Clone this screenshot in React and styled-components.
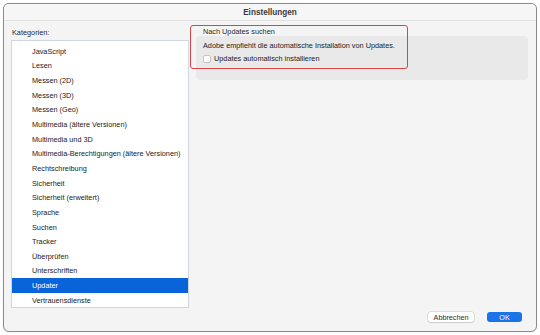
import styled, { createGlobalStyle } from 'styled-components';

const GlobalStyle = createGlobalStyle`
  html, body {
    margin: 0;
    padding: 0;
    background: #ffffff;
    font-family: "Liberation Sans", Arial, sans-serif;
    color: #222;
  }
`;

const Window = styled.div`
  position: relative;
  box-sizing: border-box;
  margin: 3px;
  width: 534px;
  height: 329px;
  border: 1px solid #8c8c8c;
  border-radius: 6px;
  background: #f4f4f4;
  display: flex;
  flex-direction: column;
  overflow: hidden;
  box-shadow: 0 0 1px rgba(0, 0, 0, 0.25);
`;

const TitleBar = styled.div`
  height: 16px;
  flex: none;
  display: flex;
  align-items: center;
  justify-content: center;
  font-size: 8.2px;
  font-weight: bold;
  color: #3a3a3a;
  border-bottom: 1px solid #e2e2e2;
  background: #f6f6f6;
`;

const Body = styled.div`
  display: flex;
  gap: 7px;
  padding: 7px 8px 0 7px;
`;

const LeftColumn = styled.div`
  width: 178px;
  display: flex;
  flex-direction: column;
`;

const Label = styled.div`
  font-size: 7.3px;
  line-height: 10px;
  height: 10px;
  color: #2a2a2a;
  padding-left: ${p => p.$indent || 0}px;
  margin-top: ${p => p.$shift || 0}px;
`;

const List = styled.div`
  margin-top: 2px;
  height: 268px;
  box-sizing: border-box;
  border: 1px solid #cfd6df;
  background: #ffffff;
  padding-top: 3px;
`;

const Item = styled.div`
  height: 14.65px;
  display: flex;
  align-items: center;
  padding-left: 20px;
  font-size: 7.3px;
  color: ${p => (p.$selected ? '#ffffff' : '#222')};
  background: ${p => (p.$selected ? '#0a64d9' : 'transparent')};
`;

const RightColumn = styled.div`
  flex: 1;
  display: flex;
  flex-direction: column;
`;

const Group = styled.div`
  margin-top: -1px;
  height: 44px;
  box-sizing: border-box;
  background: #e9e9e9;
  border-radius: 4px;
  padding: 5px 7px 0 7px;
  display: flex;
  flex-direction: column;
  gap: 3px;
`;

const GroupText = styled.div`
  font-size: 7.3px;
  line-height: 10px;
  color: #222;
`;

const CheckRow = styled.label`
  display: flex;
  align-items: center;
  gap: 3px;
  font-size: 7.3px;
  line-height: 10px;
  color: #222;
`;

const Checkbox = styled.span`
  width: 6px;
  height: 6px;
  border: 1px solid #c4c4c4;
  border-radius: 2px;
  background: #ffffff;
`;

const Highlight = styled.div`
  position: absolute;
  left: 186px;
  top: 21px;
  width: 218px;
  height: 44px;
  box-sizing: border-box;
  border: 1.5px solid #d6444c;
  border-radius: 3px;
  pointer-events: none;
`;

const Footer = styled.div`
  display: flex;
  justify-content: flex-end;
  gap: 13px;
  padding: 4px 14px 0 0;
`;

const Button = styled.div`
  height: 10px;
  width: ${p => p.$width}px;
  box-sizing: border-box;
  display: flex;
  align-items: center;
  justify-content: center;
  font-size: 7.2px;
  border-radius: 3px;
  color: ${p => (p.$primary ? '#ffffff' : '#2a2a2a')};
  background: ${p => (p.$primary ? '#1a74e8' : '#ffffff')};
  box-shadow: ${p => (p.$primary ? 'none' : '0 0 0 0.5px #c8c8c8, 0 0.5px 1px rgba(0,0,0,0.15)')};
`;

const categories = [
  'JavaScript',
  'Lesen',
  'Messen (2D)',
  'Messen (3D)',
  'Messen (Geo)',
  'Multimedia (ältere Versionen)',
  'Multimedia und 3D',
  'Multimedia-Berechtigungen (ältere Versionen)',
  'Rechtschreibung',
  'Sicherheit',
  'Sicherheit (erweitert)',
  'Sprache',
  'Suchen',
  'Tracker',
  'Überprüfen',
  'Unterschriften',
  'Updater',
  'Vertrauensdienste',
];

const App = () => {
  return (
    <>
      <GlobalStyle />
      <Window>
        <TitleBar>Einstellungen</TitleBar>
        <Body>
          <LeftColumn>
            <Label $indent={1}>Kategorien:</Label>
            <List>
              {categories.map(c => (
                <Item key={c} $selected={c === 'Updater'}>{c}</Item>
              ))}
            </List>
          </LeftColumn>
          <RightColumn>
            <Label $indent={7} $shift={-1}>Nach Updates suchen</Label>
            <Group>
              <GroupText>Adobe empfiehlt die automatische Installation von Updates.</GroupText>
              <CheckRow>
                <Checkbox />
                Updates automatisch installieren
              </CheckRow>
            </Group>
          </RightColumn>
        </Body>
        <Footer>
          <Button $width={46}>Abbrechen</Button>
          <Button $width={35} $primary>OK</Button>
        </Footer>
        <Highlight />
      </Window>
    </>
  );
};

export default App;
